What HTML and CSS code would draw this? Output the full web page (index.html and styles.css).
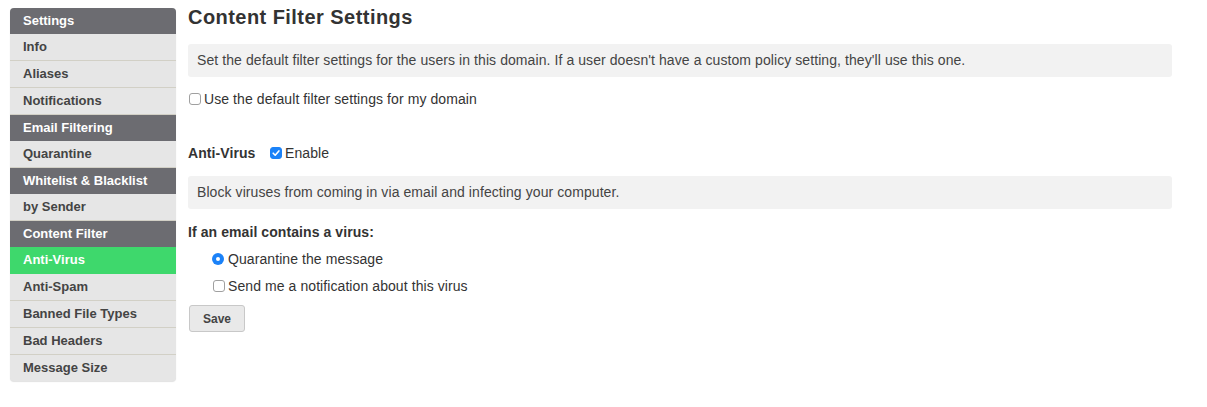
FILE: index.html
```html
<!DOCTYPE html>
<html>
<head>
<meta charset="utf-8">
<title>Content Filter Settings</title>
<link rel="stylesheet" href="styles.css">
</head>
<body>
<div class="page">
  <nav class="sidebar">
    <div class="nav-head first">Settings</div>
    <div class="nav-item">Info</div>
    <div class="nav-item">Aliases</div>
    <div class="nav-item">Notifications</div>
    <div class="nav-head">Email Filtering</div>
    <div class="nav-item">Quarantine</div>
    <div class="nav-head">Whitelist &amp; Blacklist</div>
    <div class="nav-item">by Sender</div>
    <div class="nav-head">Content Filter</div>
    <div class="nav-item active">Anti-Virus</div>
    <div class="nav-item">Anti-Spam</div>
    <div class="nav-item">Banned File Types</div>
    <div class="nav-item">Bad Headers</div>
    <div class="nav-item last">Message Size</div>
  </nav>
  <main class="main">
    <h1 class="title">Content Filter Settings</h1>
    <div class="note">Set the default filter settings for the users in this domain. If a user doesn't have a custom policy setting, they'll use this one.</div>
    <label class="row row-default"><span class="cb"></span>Use the default filter settings for my domain</label>
    <div class="row row-av">
      <span class="av-label">Anti-Virus</span>
      <label class="enable"><span class="cb checked"><svg viewBox="0 0 12 12" width="12" height="12"><path d="M3.2 6.2 L5.2 8.2 L8.9 3.9" fill="none" stroke="#fff" stroke-width="1.6" stroke-linecap="round" stroke-linejoin="round"/></svg></span>Enable</label>
    </div>
    <div class="note note-av">Block viruses from coming in via email and infecting your computer.</div>
    <div class="row question">If an email contains a virus:</div>
    <label class="row option"><span class="radio"></span>Quarantine the message</label>
    <label class="row option option-cb"><span class="cb"></span>Send me a notification about this virus</label>
    <button class="save" type="button">Save</button>
  </main>
</div>
</body>
</html>
```

FILE: styles.css
```css
html, body {
  margin: 0;
  padding: 0;
  background: #fff;
}
body {
  font-family: "Liberation Sans", Arial, Helvetica, sans-serif;
  color: #333;
  font-size: 14px;
}
.page {
  display: flex;
  align-items: flex-start;
  padding: 8px 10px;
}
.sidebar {
  width: 166px;
  flex: none;
  background: #e6e6e6;
  border-radius: 4px;
  overflow: hidden;
  box-shadow: 0 1px 1px rgba(0,0,0,0.12);
}
.nav-head, .nav-item {
  font-size: 13px;
  font-weight: bold;
  line-height: 26px;
  padding-left: 13px;
  white-space: nowrap;
}
.nav-head {
  background: #6c6c71;
  color: #fff;
  height: 26px;
}
.nav-item {
  color: #444;
  height: 26px;
  border-bottom: 1px solid #d2d0c6;
}
.nav-item.last {
  border-bottom: none;
}
.nav-item.active {
  background: #3ed86c;
  color: #fff;
  border-bottom-color: #3ed86c;
}
.main {
  margin-left: 12px;
  width: 984px;
  letter-spacing: 0.08px;
}
.title {
  margin: -3px 0 0 0;
  font-size: 20px;
  line-height: 24px;
  font-weight: bold;
  color: #333;
  letter-spacing: 0.45px;
}
.note {
  margin-top: 15px;
  background: #f2f2f2;
  border-radius: 3px;
  padding: 8px 9px;
  line-height: 17px;
  color: #444;
}
.row {
  display: flex;
  align-items: center;
  height: 20px;
  line-height: 20px;
  color: #333;
}
.row-default {
  margin-top: 12px;
  padding-left: 1px;
}
.cb {
  display: inline-flex;
  box-sizing: border-box;
  width: 12px;
  height: 12px;
  border: 1px solid #a0a0a0;
  border-radius: 3px;
  background: #fff;
  margin-right: 3px;
  flex: none;
}
.cb.checked {
  background: #1b82f8;
  border-color: #1b82f8;
}
.cb.checked svg {
  display: block;
  margin: -1px;
}
.row-av {
  margin-top: 34px;
}
.av-label {
  font-weight: bold;
  width: 82px;
}
.enable {
  display: flex;
  align-items: center;
}
.note-av {
  margin-top: 13px;
}
.question {
  margin-top: 13px;
  font-weight: bold;
}
.option {
  margin-top: 7px;
  padding-left: 24px;
}
.option-cb {
  padding-left: 25px;
}
.radio {
  display: inline-flex;
  align-items: center;
  justify-content: center;
  width: 12px;
  height: 12px;
  border-radius: 50%;
  background: #1b82f8;
  margin-right: 4px;
  flex: none;
}
.radio::after {
  content: "";
  width: 4px;
  height: 4px;
  border-radius: 50%;
  background: #fff;
}
.save {
  display: block;
  margin-top: 9px;
  margin-left: 1px;
  width: 56px;
  height: 27px;
  background: #e9e9e9;
  border: 1px solid #c8c8c8;
  border-radius: 3px;
  font-family: "Liberation Sans", Arial, Helvetica, sans-serif;
  font-size: 12px;
  font-weight: bold;
  color: #444;
  padding: 0;
  letter-spacing: 0;
}
```
